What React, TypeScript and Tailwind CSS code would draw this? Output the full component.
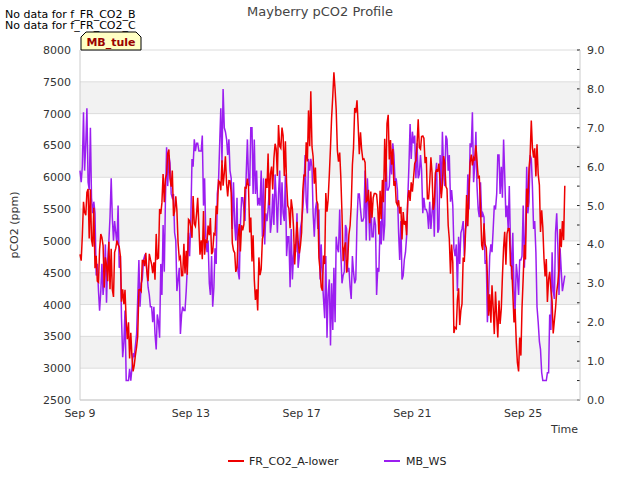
import React from "react";

function rng(seed: number) {
  let s = seed;
  return () => {
    s = (s * 1103515245 + 12345) % 2147483648;
    return s / 2147483648;
  };
}

const X0 = 80, X1 = 580, Y0 = 50, Y1 = 400;
const dayX = (d: number) => X0 + d * 27.7;
const ppmY = (v: number) => Y1 - ((v - 2500) / 5500) * (Y1 - Y0);
const wsY = (v: number) => Y1 - (v / 9) * (Y1 - Y0);

function series(seed: number, anchors: number[], lo: number, hi: number, noise: number) {
  const r = rng(seed);
  const pts: string[] = [];
  const n = 420;
  for (let i = 0; i <= n; i++) {
    const d = (i / n) * 17.5;
    const a = (d / 17.5) * (anchors.length - 1);
    const k = Math.floor(a);
    const f = a - k;
    const base = anchors[k] * (1 - f) + (anchors[Math.min(k + 1, anchors.length - 1)] ?? anchors[k]) * f;
    let v = base + Math.sin(d * 2 * Math.PI) * noise * 0.6 + (r() - 0.5) * noise;
    v = Math.max(lo, Math.min(hi, v));
    pts.push(`${dayX(d).toFixed(1)},${v.toFixed(1)}`);
  }
  return pts;
}

const redAnchors = [4700,5000,5300,4000,4600,3100,4400,5500,5800,5100,5300,4700,5600,5500,5200,5900,3600,6500,6000,5900,5300,6500,5100,7000,4800,7200,5000,6000,6300,5300,6300,5800,6500,5800,3800,5400,5700,4800,3400,5200,3400,6400,5800,3500,5500];
const purpleAnchors = [5.5,5.1,3.8,4.0,2.3,1.0,3.2,2.6,4.8,3.0,5.0,5.7,4.5,6.4,5.2,5.7,4.5,6.3,3.8,4.4,5.0,4.4,4.9,1.0,4.3,4.2,4.0,5.0,5.5,4.5,7.0,4.5,6.5,5.3,4.5,5.5,5.0,4.2,4.6,4.5,4.0,4.2,2.0,2.5,2.5];

const redPts = series(7, redAnchors, 2950, 7650, 900).map(p => {
  const [x, v] = p.split(",").map(Number);
  return `${x},${ppmY(v).toFixed(1)}`;
}).join(" ");
const purplePts = series(13, purpleAnchors, 0.5, 8.0, 2.2).map(p => {
  const [x, v] = p.split(",").map(Number);
  return `${x},${wsY(v).toFixed(1)}`;
}).join(" ");

export default function App() {
  const leftTicks = [2500,3000,3500,4000,4500,5000,5500,6000,6500,7000,7500,8000];
  const bands = [3000,4000,5000,6000,7000];
  const dates = [["Sep 9",0],["Sep 13",4],["Sep 17",8],["Sep 21",12],["Sep 25",16]] as const;
  return (
    <div className="relative w-[640px] h-[480px] bg-white" style={{ fontFamily: "'DejaVu Sans', sans-serif" }}>
      <svg width={640} height={480} className="absolute left-0 top-0">
        <rect x={X0} y={Y0} width={X1 - X0} height={Y1 - Y0} fill="#fff" />
        {bands.map(b => (
          <rect key={b} x={X0} y={ppmY(b + 500)} width={X1 - X0} height={ppmY(b) - ppmY(b + 500)} fill="#f2f2f2" />
        ))}
        {leftTicks.map(t => (
          <g key={t}>
            <line x1={X0} x2={X1} y1={ppmY(t)} y2={ppmY(t)} stroke="#dcdcdc" strokeWidth={1} />
            <text x={71} y={ppmY(t) + 4} textAnchor="end" fontSize={11} fill="#333">{t}</text>
          </g>
        ))}
        {Array.from({ length: 19 }, (_, i) => i * 0.5).map(v => (
          <g key={v}>
            <line x1={X1 - 3} x2={X1} y1={wsY(v)} y2={wsY(v)} stroke="#222" strokeWidth={1} />
            {Number.isInteger(v) && (
              <text x={587} y={wsY(v) + 4} fontSize={11} fill="#333">{v.toFixed(1)}</text>
            )}
          </g>
        ))}
        {dates.map(([l, d]) => (
          <text key={l} x={dayX(d)} y={417} textAnchor="middle" fontSize={11} fill="#333">{l}</text>
        ))}
        <line x1={X0} x2={X0} y1={Y0} y2={Y1} stroke="#ccc" />
        <line x1={X1} x2={X1} y1={Y0} y2={Y1} stroke="#ccc" />
        <line x1={X0} x2={X1} y1={Y1} y2={Y1} stroke="#ccc" />
        <polyline points={purplePts} fill="none" stroke="#9b1ef0" strokeWidth={1.5} />
        <polyline points={redPts} fill="none" stroke="#ee0000" strokeWidth={1.5} />
        <text x={320} y={16} textAnchor="middle" fontSize={13} fill="#444">Mayberry pCO2 Profile</text>
        <text x={578} y={433} textAnchor="end" fontSize={11} fill="#333">Time</text>
        <text transform="translate(18,225) rotate(-90)" textAnchor="middle" fontSize={11} fill="#333">pCO2 (ppm)</text>
        <text x={5} y={18} fontSize={11} fill="#000">No data for f_FR_CO2_B</text>
        <text x={5} y={29} fontSize={11} fill="#000">No data for f_FR_CO2_C</text>
        <polygon points="81,50 81,37 86,32 136,32 141,37 141,50" fill="#ffffc4" stroke="#000" strokeWidth={1} />
        <text x={111} y={46} textAnchor="middle" fontSize={11} fontWeight="bold" fill="#990000">MB_tule</text>
        <line x1={228} x2={244} y1={461} y2={461} stroke="#ee0000" strokeWidth={2} />
        <text x={249} y={465} fontSize={11} fill="#222">FR_CO2_A-lower</text>
        <line x1={384} x2={400} y1={461} y2={461} stroke="#9b1ef0" strokeWidth={2} />
        <text x={406} y={465} fontSize={11} fill="#222">MB_WS</text>
      </svg>
    </div>
  );
}
